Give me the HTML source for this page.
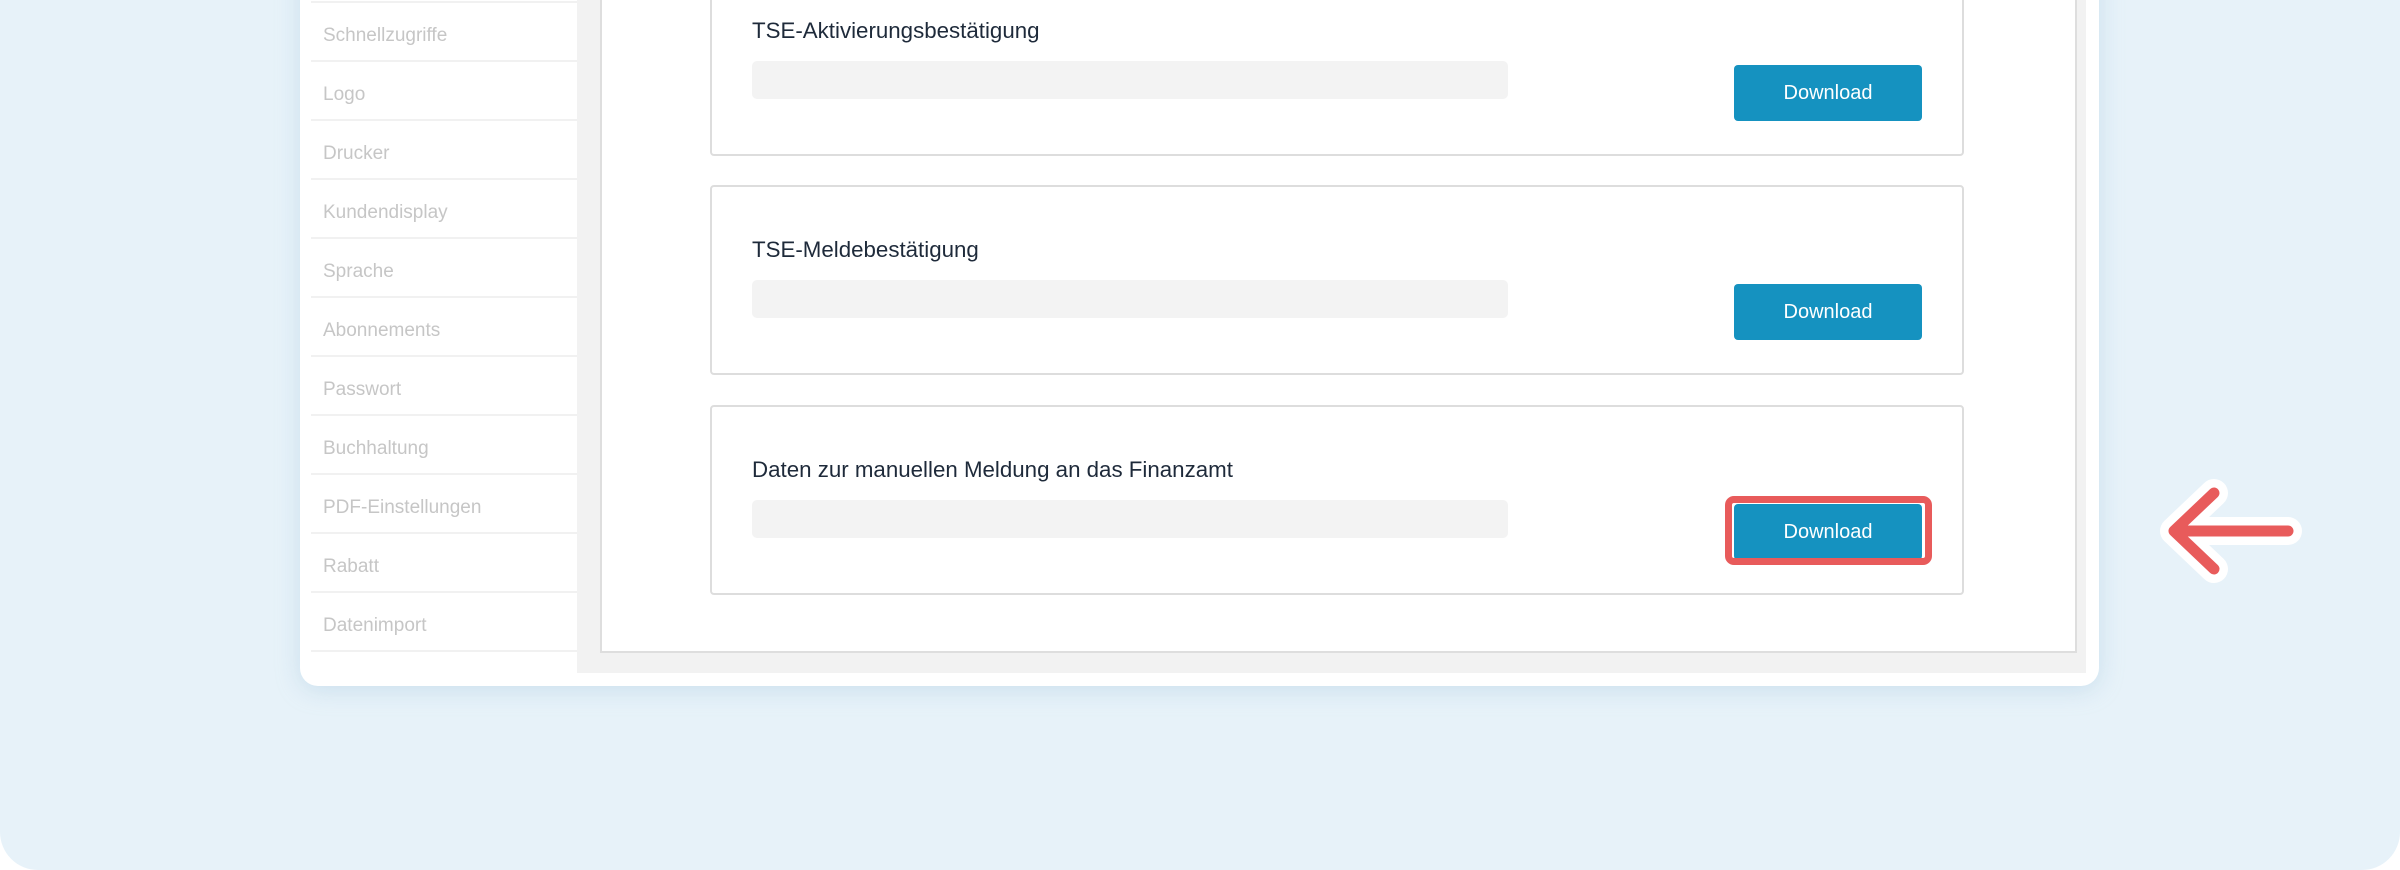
<!DOCTYPE html>
<html><head><meta charset="utf-8"><style>
*{box-sizing:border-box;margin:0;padding:0}
body{width:2400px;height:870px;background:#fff;position:relative;overflow:hidden;font-family:"Liberation Sans",sans-serif}
.bg{position:absolute;left:0;top:-40px;width:2400px;height:910px;background:#e7f2f9;border-radius:38px}
.win{position:absolute;left:300px;top:-40px;width:1799px;height:726px;background:#fff;border-radius:18px;box-shadow:0 4px 24px rgba(150,190,215,.35)}
.side{position:absolute;left:311px;top:0;width:266px}
.side div{height:59px;border-bottom:2px solid #f1f1f1;color:#c6c6c6;font-size:19px;line-height:57px;padding-left:12px;padding-top:4px}
.gray{position:absolute;left:577px;top:-40px;width:1509px;height:713px;background:#f2f2f2}
.panel{position:absolute;left:600px;top:-40px;width:1477px;height:693px;background:#fff;border:2px solid #dedede;border-top:none}
.card{position:absolute;left:710px;width:1254px;height:190px;border:2px solid #dddddd;border-radius:4px;background:#fff}
.card h3{position:absolute;left:40px;top:50px;font-weight:normal;font-size:22.3px;color:#1e2a3a}
.card .bar{position:absolute;left:40px;top:93px;width:756px;height:38px;background:#f3f3f3;border-radius:5px}
.card .btn{position:absolute;left:1022px;top:97px;width:188px;height:56px;background:#1592c0;border-radius:4px;color:#fff;font-size:20px;text-align:center;line-height:56px}
.hl{position:absolute;left:1725px;top:496px;width:207px;height:69px;border:7px solid #e85b5b;border-radius:9px}
</style></head><body>
<div class="bg"></div>
<div class="win"></div>
<div class="side">
<div style="height:3px;padding:0"></div>
<div>Schnellzugriffe</div><div>Logo</div><div>Drucker</div><div>Kundendisplay</div><div>Sprache</div><div>Abonnements</div><div>Passwort</div><div>Buchhaltung</div><div>PDF-Einstellungen</div><div>Rabatt</div><div>Datenimport</div>
</div>
<div class="gray"></div>
<div class="panel"></div>
<div class="card" style="top:-34px"><h3>TSE-Aktivierungsbestätigung</h3><div class="bar"></div><div class="btn">Download</div></div>
<div class="card" style="top:185px"><h3>TSE-Meldebestätigung</h3><div class="bar"></div><div class="btn">Download</div></div>
<div class="card" style="top:405px"><h3>Daten zur manuellen Meldung an das Finanzamt</h3><div class="bar"></div><div class="btn">Download</div></div>
<div class="hl"></div>
<svg style="position:absolute;left:0;top:0" width="2400" height="870">
<path d="M2288 531 H2174 M2214 493 L2174 531 L2214 569" fill="none" stroke="#fff" stroke-width="28" stroke-linecap="round" stroke-linejoin="round"/>
<path d="M2288 531 H2174 M2214 493 L2174 531 L2214 569" fill="none" stroke="#e85b5b" stroke-width="11" stroke-linecap="round" stroke-linejoin="round"/>
</svg>
</body></html>
